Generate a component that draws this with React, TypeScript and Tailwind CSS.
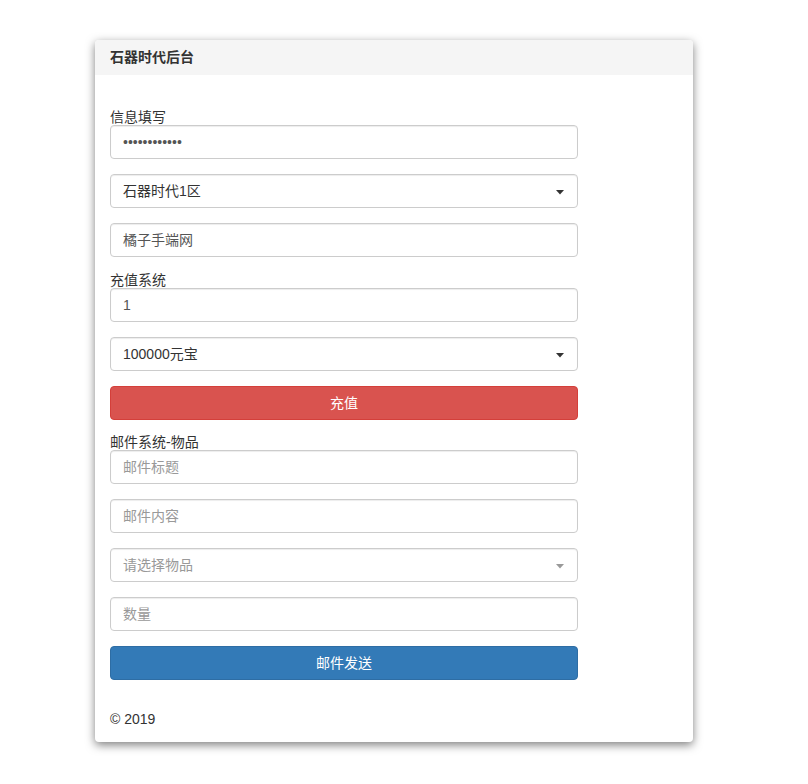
import React from "react";

const font = { fontFamily: '"Liberation Sans", "Noto Sans CJK SC", sans-serif' };

function Caret({ muted }: { muted?: boolean }) {
  return (
    <svg width="8" height="5" viewBox="0 0 8 5" className="absolute right-[13px] top-[15px]">
      <path d="M0 0 L8 0 L4 4.5 Z" fill={muted ? "#999" : "#333"} />
    </svg>
  );
}

function Field({ children, className = "" }: { children: React.ReactNode; className?: string }) {
  return (
    <div
      className={`relative h-[34px] w-[468px] rounded-[4px] border border-[#ccc] bg-white px-[12px] text-[14px] leading-[32px] shadow-[inset_0_1px_1px_rgba(0,0,0,0.075)] ${className}`}
    >
      {children}
    </div>
  );
}

export default function App() {
  return (
    <div className="min-h-[784px] bg-white pt-[40px] text-[#333]" style={font}>
      <div className="ml-[95px] w-[598px] overflow-hidden rounded-[4px] bg-white shadow-[0_3px_10px_rgba(0,0,0,0.5)]">
        <div className="h-[35px] bg-[#f5f5f5] px-[15px] text-[14px] font-bold leading-[35px] text-[#333]">
          石器时代后台
        </div>
        <div className="px-[15px] pb-[13px] pt-[34px]">
          <div className="flex flex-col">
            <div className="text-[14px] leading-[16px]">信息填写</div>
            <Field className="text-[#555]">
              <span className="text-[14px]">••••••••••••</span>
            </Field>
            <Field className="mt-[15px] text-[#333]">
              石器时代1区
              <Caret />
            </Field>
            <Field className="mt-[15px] text-[#555]">橘子手端网</Field>

            <div className="mt-[15px] text-[14px] leading-[16px]">充值系统</div>
            <Field className="text-[#555]">1</Field>
            <Field className="mt-[15px] text-[#333]">
              100000元宝
              <Caret />
            </Field>
            <button className="mt-[15px] h-[34px] w-[468px] rounded-[4px] border border-[#d43f3a] bg-[#d9534f] text-[14px] text-white">
              充值
            </button>

            <div className="mt-[14px] text-[14px] leading-[16px]">邮件系统-物品</div>
            <Field className="text-[#999]">邮件标题</Field>
            <Field className="mt-[15px] text-[#999]">邮件内容</Field>
            <Field className="mt-[15px] text-[#999]">
              请选择物品
              <Caret muted />
            </Field>
            <Field className="mt-[15px] text-[#999]">数量</Field>
            <button className="mt-[15px] h-[34px] w-[468px] rounded-[4px] border border-[#2e6da4] bg-[#337ab7] text-[14px] text-white">
              邮件发送
            </button>

            <div className="mt-[29px] text-[14px] leading-[20px] text-[#333]">© 2019</div>
          </div>
        </div>
      </div>
    </div>
  );
}
